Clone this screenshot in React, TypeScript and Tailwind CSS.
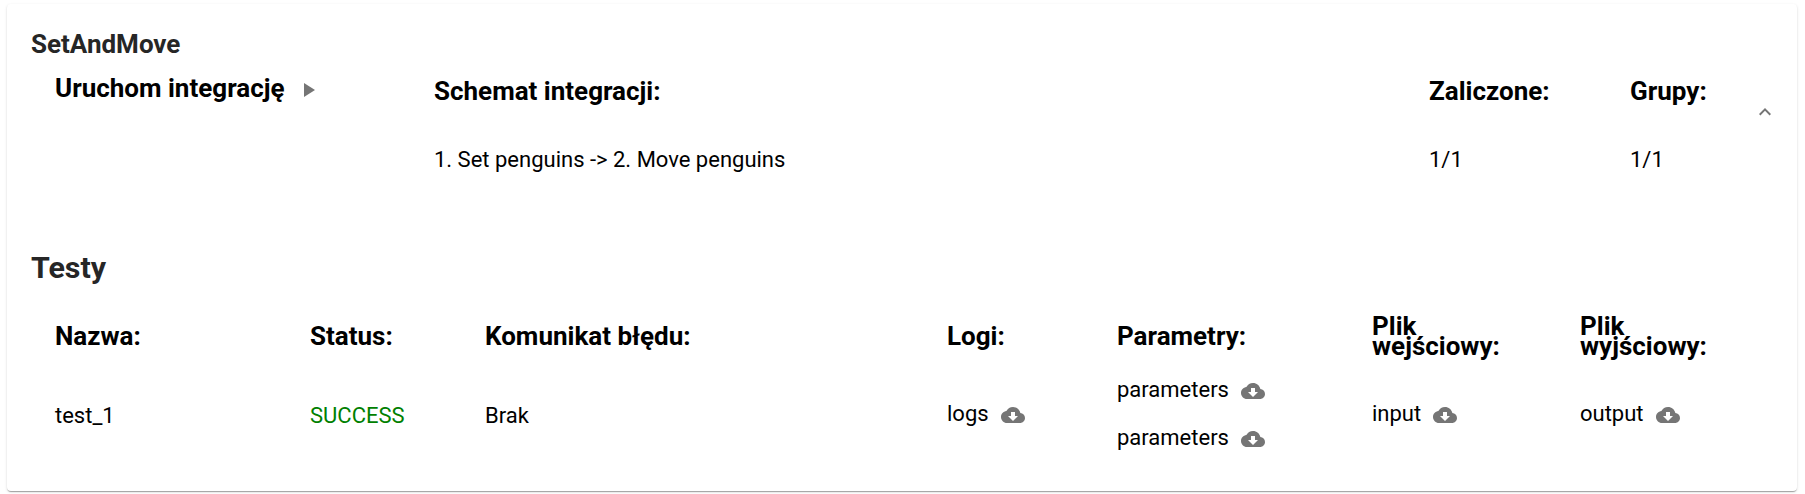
import React from "react";

function CloudDownload() {
  return (
    <svg viewBox="0 0 24 24" className="ml-3 size-6 shrink-0 fill-[#757575]">
      <path d="M19.35 10.04C18.67 6.59 15.64 4 12 4 9.11 4 6.6 5.64 5.35 8.04 2.34 8.36 0 10.91 0 14c0 3.31 2.69 6 6 6h13c2.76 0 5-2.24 5-5 0-2.64-2.05-4.78-4.65-4.96zM17 13l-5 5-5-5h3V9h4v4h3z" />
    </svg>
  );
}

function FileLink({ name }: { name: string }) {
  return (
    <div className="flex h-12 items-center">
      <span className="-mt-0.5">{name}</span>
      <CloudDownload />
    </div>
  );
}

const heading = "text-[26px] leading-5 font-bold";

export default function App() {
  return (
    <div className="h-[494px] bg-white pt-1 pr-2 pl-[7px] font-[Roboto,sans-serif] text-[22px] leading-[26px] text-black">
      <section className="h-[487px] rounded-[4px] bg-white pl-6 shadow-[0_2px_1px_-1px_rgba(0,0,0,0.2),0_1px_1px_0_rgba(0,0,0,0.14),0_1px_3px_0_rgba(0,0,0,0.12)]">
        <h2 className="pt-[25px] text-[26px] leading-[30px] font-bold text-[#262626]">SetAndMove</h2>
        <div className="grid h-[163px] grid-cols-[379px_995px_201px_auto] pt-[14px] pl-6">
          <div className="flex h-[30px] items-center">
            <span className={heading}>Uruchom integrację</span>
            <svg viewBox="0 0 24 24" className="mt-1 ml-[11px] size-6 fill-[#757575]">
              <path d="M8 5v14l11-7z" />
            </svg>
          </div>
          <div className="pt-2">
            <h3 className={heading}>Schemat integracji:</h3>
            <p className="mt-[46px]">1. Set penguins -&gt; 2. Move penguins</p>
          </div>
          <div className="pt-2">
            <h3 className={heading}>Zaliczone:</h3>
            <p className="mt-[46px]">1/1</p>
          </div>
          <div className="flex">
            <div className="w-[123px] pt-2">
              <h3 className={heading}>Grupy:</h3>
              <p className="mt-[46px]">1/1</p>
            </div>
            <svg viewBox="0 0 24 24" className="mt-[27px] size-6 fill-[#757575]">
              <path d="M12 8l-6 6 1.41 1.41L12 10.83l4.59 4.58L18 14z" />
            </svg>
          </div>
        </div>
        <h2 className="pt-[29px] text-[30.4px] leading-[34px] font-bold text-[#262626]">Testy</h2>
        <div className="grid grid-cols-[255px_175px_462px_170px_255px_208px_160px] grid-rows-[40px_96px] items-center gap-y-[11px] pt-[31px] pl-6">
          <h3 className={heading}>Nazwa:</h3>
          <h3 className={heading}>Status:</h3>
          <h3 className={heading}>Komunikat błędu:</h3>
          <h3 className={heading}>Logi:</h3>
          <h3 className={heading}>Parametry:</h3>
          <h3 className={heading}>Plik<br />wejściowy:</h3>
          <h3 className={heading}>Plik<br />wyjściowy:</h3>
          <p className="pt-0.5">test_1</p>
          <p className="pt-0.5 text-[#008000]">SUCCESS</p>
          <p className="pt-0.5">Brak</p>
          <FileLink name="logs" />
          <div>
            <FileLink name="parameters" />
            <FileLink name="parameters" />
          </div>
          <FileLink name="input" />
          <FileLink name="output" />
        </div>
      </section>
    </div>
  );
}
